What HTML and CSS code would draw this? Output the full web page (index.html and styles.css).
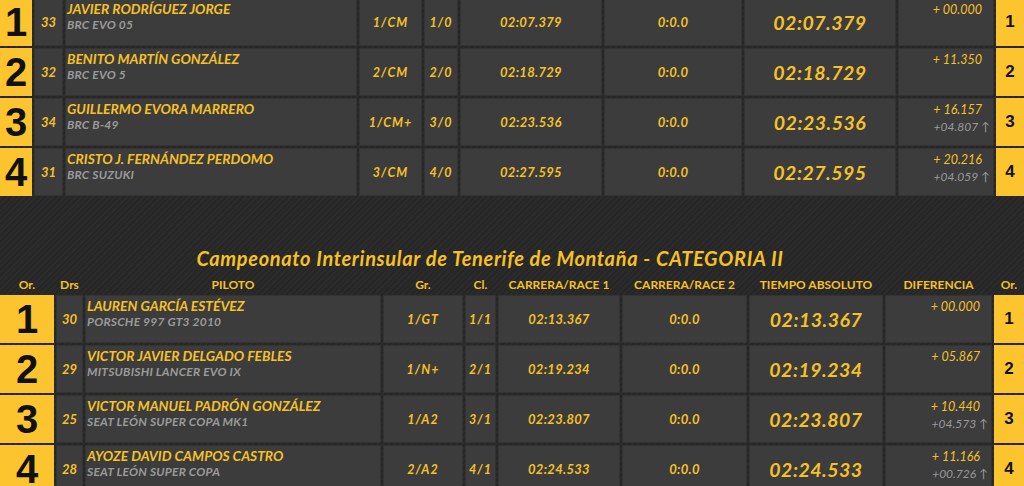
FILE: index.html
```html
<!DOCTYPE html>
<html lang="es">
<head>
<meta charset="utf-8">
<title>Clasificación</title>
<link rel="stylesheet" href="styles.css">
</head>
<body>
<div class="page">
  <table class="results results-a">
    <colgroup>
      <col class="c-or-a"><col class="c-drs-a"><col class="c-pil-a"><col class="c-gr-a"><col class="c-cl-a"><col class="c-r1-a"><col class="c-r2-a"><col class="c-tm-a"><col class="c-dif-a"><col class="c-or2-a">
    </colgroup>
    <tbody>
      <tr>
        <td class="pos">1</td><td class="drs">33</td>
        <td class="pil"><div class="name">JAVIER RODRÍGUEZ JORGE</div><div class="car">BRC EVO 05</div></td>
        <td class="gr">1/CM</td><td class="cl">1/0</td><td class="race">02:07.379</td><td class="race">0:0.0</td>
        <td class="abs">02:07.379</td>
        <td class="dif"><div class="gap">+ 00.000</div></td>
        <td class="pos2">1</td>
      </tr>
      <tr>
        <td class="pos">2</td><td class="drs">32</td>
        <td class="pil"><div class="name">BENITO MARTÍN GONZÁLEZ</div><div class="car">BRC EVO 5</div></td>
        <td class="gr">2/CM</td><td class="cl">2/0</td><td class="race">02:18.729</td><td class="race">0:0.0</td>
        <td class="abs">02:18.729</td>
        <td class="dif"><div class="gap">+ 11.350</div></td>
        <td class="pos2">2</td>
      </tr>
      <tr>
        <td class="pos">3</td><td class="drs">34</td>
        <td class="pil"><div class="name">GUILLERMO EVORA MARRERO</div><div class="car">BRC B-49</div></td>
        <td class="gr">1/CM+</td><td class="cl">3/0</td><td class="race">02:23.536</td><td class="race">0:0.0</td>
        <td class="abs">02:23.536</td>
        <td class="dif"><div class="gap">+ 16.157</div><div class="prev">+04.807 ↑</div></td>
        <td class="pos2">3</td>
      </tr>
      <tr>
        <td class="pos">4</td><td class="drs">31</td>
        <td class="pil"><div class="name">CRISTO J. FERNÁNDEZ PERDOMO</div><div class="car">BRC SUZUKI</div></td>
        <td class="gr">3/CM</td><td class="cl">4/0</td><td class="race">02:27.595</td><td class="race">0:0.0</td>
        <td class="abs">02:27.595</td>
        <td class="dif"><div class="gap">+ 20.216</div><div class="prev">+04.059 ↑</div></td>
        <td class="pos2">4</td>
      </tr>
    </tbody>
  </table>

  <h2 class="cat-title">Campeonato Interinsular de Tenerife de Montaña - CATEGORIA II</h2>

  <table class="results results-b">
    <colgroup>
      <col class="c-or-b"><col class="c-drs-b"><col class="c-pil-b"><col class="c-gr-b"><col class="c-cl-b"><col class="c-r1-b"><col class="c-r2-b"><col class="c-tm-b"><col class="c-dif-b"><col class="c-or2-b">
    </colgroup>
    <thead>
      <tr>
        <th>Or.</th><th>Drs</th><th>PILOTO</th><th>Gr.</th><th>Cl.</th><th>CARRERA/RACE 1</th><th>CARRERA/RACE 2</th><th>TIEMPO ABSOLUTO</th><th>DIFERENCIA</th><th>Or.</th>
      </tr>
    </thead>
    <tbody>
      <tr>
        <td class="pos">1</td><td class="drs">30</td>
        <td class="pil"><div class="name">LAUREN GARCÍA ESTÉVEZ</div><div class="car">PORSCHE 997 GT3 2010</div></td>
        <td class="gr">1/GT</td><td class="cl">1/1</td><td class="race">02:13.367</td><td class="race">0:0.0</td>
        <td class="abs">02:13.367</td>
        <td class="dif"><div class="gap">+ 00.000</div></td>
        <td class="pos2">1</td>
      </tr>
      <tr>
        <td class="pos">2</td><td class="drs">29</td>
        <td class="pil"><div class="name">VICTOR JAVIER DELGADO FEBLES</div><div class="car">MITSUBISHI LANCER EVO IX</div></td>
        <td class="gr">1/N+</td><td class="cl">2/1</td><td class="race">02:19.234</td><td class="race">0:0.0</td>
        <td class="abs">02:19.234</td>
        <td class="dif"><div class="gap">+ 05.867</div></td>
        <td class="pos2">2</td>
      </tr>
      <tr>
        <td class="pos">3</td><td class="drs">25</td>
        <td class="pil"><div class="name">VICTOR MANUEL PADRÓN GONZÁLEZ</div><div class="car">SEAT LEÓN SUPER COPA MK1</div></td>
        <td class="gr">1/A2</td><td class="cl">3/1</td><td class="race">02:23.807</td><td class="race">0:0.0</td>
        <td class="abs">02:23.807</td>
        <td class="dif"><div class="gap">+ 10.440</div><div class="prev">+04.573 ↑</div></td>
        <td class="pos2">3</td>
      </tr>
      <tr>
        <td class="pos">4</td><td class="drs">28</td>
        <td class="pil"><div class="name">AYOZE DAVID CAMPOS CASTRO</div><div class="car">SEAT LEÓN SUPER COPA</div></td>
        <td class="gr">2/A2</td><td class="cl">4/1</td><td class="race">02:24.533</td><td class="race">0:0.0</td>
        <td class="abs">02:24.533</td>
        <td class="dif"><div class="gap">+ 11.166</div><div class="prev">+00.726 ↑</div></td>
        <td class="pos2">4</td>
      </tr>
    </tbody>
  </table>
</div>
</body>
</html>
```
FILE: styles.css
```css
html, body {
  margin: 0;
  padding: 0;
}
body {
  background-color: #282828;
  background-image: repeating-linear-gradient(135deg, #2b2b2b 0 2px, #262626 2px 4px);
  font-family: Lato, "Open Sans", sans-serif;
  color: #f6c127;
  overflow: hidden;
}
.page {
  width: 1024px;
  height: 486px;
  overflow: hidden;
}
.results {
  table-layout: fixed;
  border-collapse: separate;
  border-spacing: 2px;
  width: 1028px;
  margin: 0 -2px;
}
.results-a { margin-top: -4px; }
.results td {
  background: #3c3c3c;
  padding: 0;
  height: 48px;
  box-sizing: border-box;
  border: 1px solid #333;
  vertical-align: middle;
  text-align: center;
  font-style: italic;
  color: #f6c127;
}

/* column widths, table A */
.c-or-a { width: 32px; }
.c-drs-a { width: 29px; }
.c-pil-a { width: 292px; }
.c-gr-a { width: 63px; }
.c-cl-a { width: 34px; }
.c-r1-a { width: 142px; }
.c-r2-a { width: 138px; }
.c-tm-a { width: 152px; }
.c-dif-a { width: 96px; }
.c-or2-a { width: 28px; }

/* column widths, table B */
.c-or-b { width: 54px; }
.c-drs-b { width: 27px; }
.c-pil-b { width: 296px; }
.c-gr-b { width: 80px; }
.c-cl-b { width: 31px; }
.c-r1-b { width: 122px; }
.c-r2-b { width: 125px; }
.c-tm-b { width: 134px; }
.c-dif-b { width: 107px; }
.c-or2-b { width: 30px; }

.results td.pos {
  background: #fcc52f;
  border-color: #fcc52f;
  color: #111;
  font-family: "Liberation Sans", Arial, sans-serif;
  font-style: normal;
  font-weight: 700;
  font-size: 40px;
  line-height: 1;
}
.results td.pos2 {
  background: #fcc52f;
  border-color: #fcc52f;
  color: #111;
  font-family: "Liberation Sans", Arial, sans-serif;
  font-style: normal;
  font-weight: 700;
  font-size: 17px;
}
.results td.drs {
  font-weight: 700;
  font-size: 13px;
}
.results td.pil {
  text-align: left;
  vertical-align: top;
  padding: 2px 0 0 1px;
}
.name {
  font-weight: 700;
  font-size: 13.8px;
  line-height: 16px;
  color: #f6c127;
}
.car {
  font-size: 12px;
  line-height: 16px;
  color: #9a9a9a;
  font-weight: 700;
  letter-spacing: 0.2px;
}
.results td.gr, .results td.cl {
  font-weight: 700;
  font-size: 12.5px;
  letter-spacing: 1px;
}
.results td.race {
  font-size: 13px;
  font-weight: 700;
  letter-spacing: 0.3px;
}
.results td.abs {
  font-weight: 700;
  font-size: 19.5px;
  letter-spacing: 0.5px;
}
.results td.dif {
  vertical-align: top;
  text-align: right;
  padding: 3px 3px 0 0;
}
.gap {
  font-size: 12.5px;
  line-height: 16px;
  padding-right: 8px;
}
.prev {
  font-size: 12px;
  line-height: 17px;
  color: #9a9a9a;
}

.cat-title {
  margin: 48px 0 2px;
  padding-right: 44px;
  text-align: center;
  font-size: 20px;
  line-height: 25px;
  font-weight: 700;
  font-style: italic;
  letter-spacing: 0.65px;
  color: #f6c127;
}
.results th {
  height: 18px;
  padding: 0;
  font-size: 12px;
  font-weight: 700;
  color: #f6c127;
  text-align: center;
  vertical-align: bottom;
  line-height: 16px;
}
```
